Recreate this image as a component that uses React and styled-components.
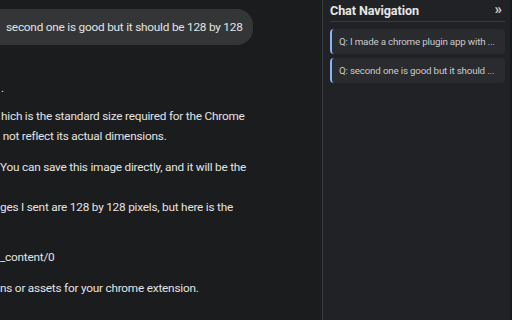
import React from 'react';
import styled, { createGlobalStyle } from 'styled-components';

const GlobalStyle = createGlobalStyle`
  html, body {
    margin: 0;
    padding: 0;
    background: #1b1c1e;
  }
  body {
    font-family: Roboto, "Noto Sans", sans-serif;
    overflow: hidden;
  }
`;

const Page = styled.div`
  display: flex;
  width: 512px;
  height: 320px;
  overflow: hidden;
`;

const Chat = styled.main`
  flex: 1;
  min-width: 0;
  display: flex;
  flex-direction: column;
  padding-top: 9px;
  color: #e3e3e3;
  font-size: 11.8px;
  letter-spacing: -0.22px;
`;

const UserBubble = styled.div`
  align-self: flex-start;
  margin-left: -20px;
  padding: 0 10px 0 26px;
  height: 36px;
  display: flex;
  align-items: center;
  background: #333537;
  border-radius: 0 16px 16px 0;
  color: #e3e3e3;
  white-space: nowrap;
`;

const Answer = styled.div`
  display: flex;
  flex-direction: column;
  margin-top: 33px;
`;

const Para = styled.p`
  margin: 0 0 ${(p) => p.gap || 11}px;
  line-height: 20px;
  white-space: nowrap;
  padding-left: ${(p) => p.indent || 0}px;
`;

const Line = styled.span`
  display: block;
  padding-left: ${(p) => p.indent || 0}px;
`;

const Sidebar = styled.aside`
  width: 190px;
  flex-shrink: 0;
  background: #212225;
  border-left: 1px solid #38393c;
  border-right: 2px solid #18191b;
  display: flex;
  flex-direction: column;
  padding: 0 5px 0 7px;
  box-sizing: border-box;
`;

const Header = styled.div`
  display: flex;
  align-items: center;
  justify-content: space-between;
  height: 21px;
  border-bottom: 1px solid #3a3b3e;
`;

const Title = styled.h2`
  margin: 0;
  font-size: 12.6px;
  font-weight: 700;
  letter-spacing: -0.1px;
  color: #e6e6e6;
`;

const Collapse = styled.span`
  color: #d0d0d0;
  font-size: 15px;
  font-weight: 700;
  line-height: 1;
  margin-right: 3px;
  margin-top: -2px;
`;

const NavList = styled.div`
  display: flex;
  flex-direction: column;
  gap: 4px;
  margin-top: 7px;
`;

const NavItem = styled.div`
  height: 25px;
  display: flex;
  align-items: center;
  padding-left: 7px;
  background: #2a2b2e;
  border-left: 2px solid #8ab4f8;
  border-radius: 4px;
  color: #c8cacc;
  font-size: 9.8px;
  letter-spacing: -0.2px;
  white-space: nowrap;
  overflow: hidden;
`;

export default function App() {
  return (
    <>
      <GlobalStyle />
      <Page>
        <Chat>
          <UserBubble>second one is good but it should be 128 by 128</UserBubble>
          <Answer>
            <Para gap={8} indent={1}>.</Para>
            <Para>
              <Line indent={1}>hich is the standard size required for the Chrome</Line>
              <Line>&nbsp;not reflect its actual dimensions.</Line>
            </Para>
            <Para gap={20}>
              <Line>You can save this image directly, and it will be the</Line>
            </Para>
            <Para gap={30}>
              <Line>ges I sent are 128 by 128 pixels, but here is the</Line>
            </Para>
            <Para gap={11}>
              <Line>_content/0</Line>
            </Para>
            <Para>
              <Line>ns or assets for your chrome extension.</Line>
            </Para>
          </Answer>
        </Chat>
        <Sidebar>
          <Header>
            <Title>Chat Navigation</Title>
            <Collapse>»</Collapse>
          </Header>
          <NavList>
            <NavItem>Q: I made a chrome plugin app with ...</NavItem>
            <NavItem>Q: second one is good but it should ...</NavItem>
          </NavList>
        </Sidebar>
      </Page>
    </>
  );
}
